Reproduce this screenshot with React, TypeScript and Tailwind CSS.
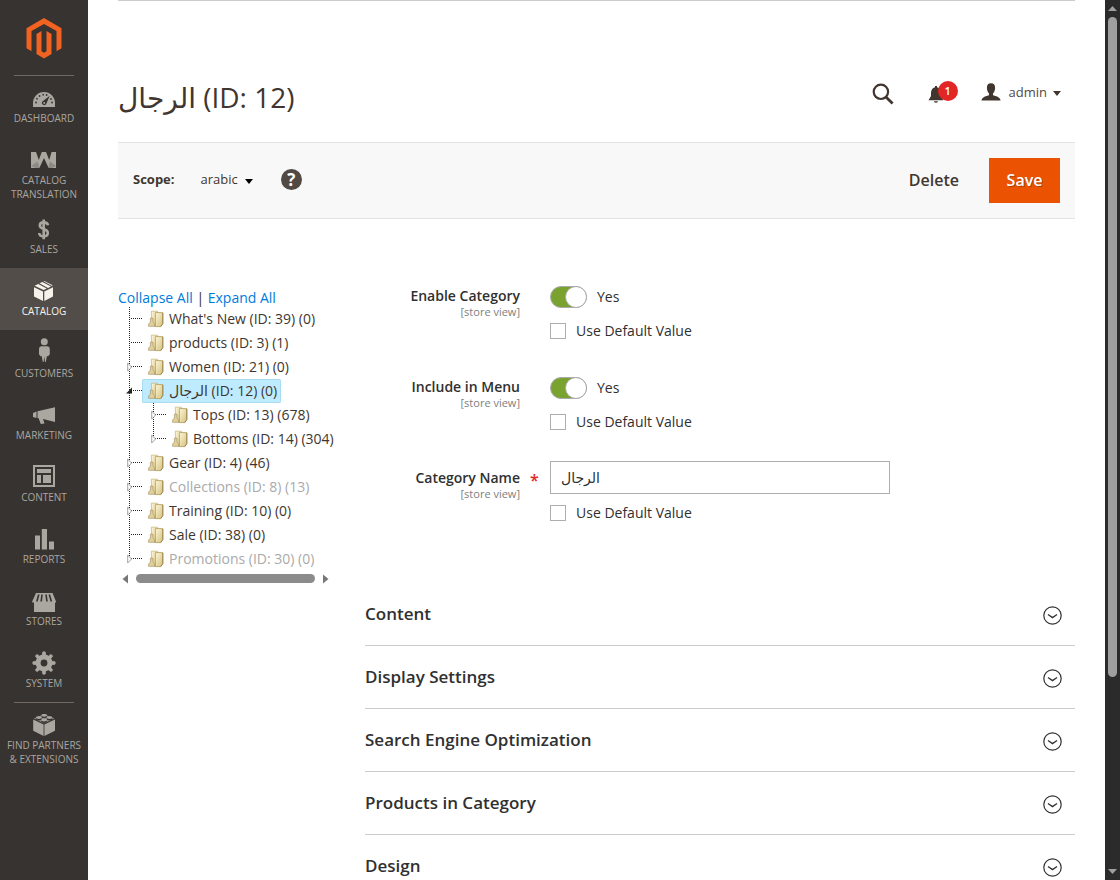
import type { ReactNode } from 'react';

const FONT = "font-['Open_Sans','DejaVu_Sans',sans-serif]";

/* ---------- Sidebar ---------- */

function LogoIcon() {
  return (
    <svg width="36" height="41" viewBox="0 0 36 41" fill="#f26322" aria-hidden="true">
      <path d="M18 0 0.5 10.2V30.3L5.5 33.2V13.1L18 5.9 30.5 13.1V33.2L35.5 30.3V10.2Z" />
      <path d="M20.5 33.2 18 34.7 15.5 33.2V13.1L10.5 16V36.1L18 40.5 25.5 36.1V16L20.5 13.1Z" />
    </svg>
  );
}

const icons: Record<string, ReactNode> = {
  dashboard: (
    <>
      <path d="M3 24V20A11 11 0 0 1 25 20V24Z" />
      <g fill="#373330">
        <circle cx="6" cy="19.5" r="0.9" />
        <circle cx="7" cy="15.7" r="0.9" />
        <circle cx="9.6" cy="13" r="0.9" />
        <circle cx="13.2" cy="11.7" r="0.9" />
        <circle cx="16.6" cy="12" r="0.9" />
        <circle cx="22" cy="19.5" r="0.9" />
        <circle cx="21" cy="16" r="0.9" />
        <path d="M19.8 12.8 16.4 20.6A2.3 2.3 0 1 1 12.4 18.4Z" />
      </g>
      <circle cx="14.2" cy="20" r="0.9" />
    </>
  ),
  translation: (
    <>
      <path d="M1 7H6L8.8 15 11.8 7H16L19.2 15 21.6 7H26V23H18.6L14 13 9.4 23H1Z" />
      <path d="M1 21 7.5 16.5 9.5 22.5 9.2 23H5.5ZM26 21 20 16.5 18.4 22.5 18.6 23H22Z" fill="#373330" fillOpacity="0.25" />
    </>
  ),
  sales: (
    <path
      d="M18 11.2C17.6 8.9 16 8.4 13.8 8.4 11.3 8.4 9.8 9.6 9.8 11.5 9.8 16.2 17.8 13.7 17.8 18.8 17.8 21.2 16 22.4 13.6 22.4 11 22.4 9.4 21.4 9.2 19M13.7 5.5V25.2"
      fill="none"
      stroke="currentColor"
      strokeWidth="2.6"
    />
  ),
  catalog: (
    <>
      <path d="M4 11.3 13 15.6V25L4 20.4ZM14.3 15.6 23 11.3V20.4L14.3 25Z" />
      <path d="M9.5 7.3 12.3 6 21 10.4 18 11.9ZM4.6 9.8 8.2 8 16.8 12.4 13.6 14ZM13.5 5.3 14.3 5 22.6 9.3 22 9.9Z" />
    </>
  ),
  customers: (
    <>
      <circle cx="14.3" cy="3.7" r="3.5" />
      <path d="M11.2 8.3H17.5Q19.8 8.5 19.8 11V16.2L18 18.5 17 17.8 15.8 24H15L14.3 18.5 13.6 24H12.8L11.6 17.8 10.6 18.5 9 16.2V11Q9 8.5 11.2 8.3Z" />
    </>
  ),
  marketing: (
    <>
      <path d="M3 13 6.5 11.6V18L3 17Z" />
      <path d="M7.5 11.3 25 7.2V22L13 18.9 14.5 23.6 10.8 24 8.6 18.3 7.5 18Z" />
    </>
  ),
  content: (
    <>
      <path fillRule="evenodd" d="M3 3H25V25H3ZM5 5V23H23V5Z" />
      <path d="M7 7H21V11H7ZM7 13H11V21H7ZM13 13H21V21H13Z" />
    </>
  ),
  reports: <path d="M5 11.5H10V25.5H5ZM11.8 5H17V25.5H11.8ZM19 17.5H24V25.5H19Z" />,
  stores: (
    <>
      <path d="M6 7H22.5L26 15.5V16.5H25V26H4V16.5H2.2V15.5Z" />
      <path
        d="M8.8 8.5 6.8 15.5M12 8.5 11.2 15.5M16 8.5 17 15.5M19.3 8.5 21.4 15.5"
        stroke="#373330"
        strokeWidth="1.6"
      />
    </>
  ),
  system: (
    <>
      <circle cx="14" cy="15" r="5.9" fill="none" stroke="currentColor" strokeWidth="5" />
      <path
        d="M12.3 7.5 12.8 4Q14 3.6 15.2 4L15.7 7.5ZM12.3 22.5 12.8 26Q14 26.4 15.2 26L15.7 22.5ZM6.5 13.3 3 13.8Q2.6 15 3 16.2L6.5 16.7ZM21.5 13.3 25 13.8Q25.4 15 25 16.2L21.5 16.7ZM7.5 10.9 5.4 8.1Q6 7 7.1 6.4L9.9 8.5ZM20.5 10.9 22.6 8.1Q22 7 20.9 6.4L18.1 8.5ZM7.5 19.1 5.4 21.9Q6 23 7.1 23.6L9.9 21.5ZM20.5 19.1 22.6 21.9Q22 23 20.9 23.6L18.1 21.5Z"
        stroke="currentColor"
        strokeWidth="0.8"
      />
    </>
  ),
  partners: (
    <>
      <path d="M3.2 9.6 13.6 14.4V26L3.2 20.8ZM14.4 14.4 25 9.6V20.8L14.4 26Z" />
      <path d="M3.8 8.6 14 4.3 24.4 8.6 14 13.4Z" fillOpacity="0.75" />
      <g fill="#373330">
        <ellipse cx="14.2" cy="6.7" rx="3" ry="1.4" />
        <ellipse cx="8.8" cy="9" rx="3" ry="1.4" />
        <ellipse cx="19.6" cy="9" rx="3" ry="1.4" />
        <ellipse cx="14.2" cy="11.5" rx="3" ry="1.4" />
      </g>
      <ellipse cx="14.2" cy="5.3" rx="2.9" ry="1.4" />
      <ellipse cx="8.8" cy="7.6" rx="2.9" ry="1.4" />
      <ellipse cx="19.6" cy="7.6" rx="2.9" ry="1.4" />
      <ellipse cx="14.2" cy="10.1" rx="2.9" ry="1.4" />
    </>
  ),
};

const navItems = [
  { icon: 'dashboard', label: 'DASHBOARD' },
  { icon: 'translation', label: 'CATALOG TRANSLATION' },
  { icon: 'sales', label: 'SALES' },
  { icon: 'catalog', label: 'CATALOG', active: true },
  { icon: 'customers', label: 'CUSTOMERS' },
  { icon: 'marketing', label: 'MARKETING' },
  { icon: 'content', label: 'CONTENT' },
  { icon: 'reports', label: 'REPORTS' },
  { icon: 'stores', label: 'STORES' },
  { icon: 'system', label: 'SYSTEM' },
];

function NavItem({ icon, label, active }: { icon: string; label: string; active?: boolean }) {
  return (
    <a
      href="#"
      aria-current={active ? 'page' : undefined}
      className={`flex min-h-[62px] flex-col items-center px-1 pt-2 pb-[5px] text-center text-[10px] leading-[14px] ${
        active ? 'bg-[#524d49] text-[#f7f3eb]' : 'text-[#aaa6a0]'
      }`}
    >
      <svg width="28" height="28" viewBox="0 0 28 28" fill="currentColor" className="shrink-0" aria-hidden="true">
        {icons[icon]}
      </svg>
      <span>{label}</span>
    </a>
  );
}

function Sidebar() {
  return (
    <nav className="w-[88px] shrink-0 bg-[#373330]">
      <a href="#" aria-label="Home" className="flex h-[75px] justify-center pt-[18px]">
        <LogoIcon />
      </a>
      <hr className="mx-3.5 -mb-px border-[#736963]" />
      {navItems.map((item) => (
        <NavItem key={item.label} {...item} />
      ))}
      <hr className="mx-3.5 -mb-px border-[#736963]" />
      <a
        href="#"
        className="flex flex-col items-center pt-2 text-center text-[10px] leading-[14px] text-[#aaa6a0]"
      >
        <svg width="28" height="28" viewBox="0 0 28 28" fill="currentColor" aria-hidden="true">
          {icons.partners}
        </svg>
        <span>
          FIND PARTNERS
          <br />& EXTENSIONS
        </span>
      </a>
    </nav>
  );
}

/* ---------- Header and toolbar ---------- */

function Caret() {
  return (
    <svg width="8" height="5" viewBox="0 0 8 5" fill="currentColor" aria-hidden="true">
      <path d="M0 0H8L4 5Z" />
    </svg>
  );
}

function Header() {
  return (
    <header className="flex items-start justify-between border-t border-[#cccccc] pt-[77px] text-[#41362f]">
      <h1 className="h-16 text-[28px] leading-[38px]">الرجال (ID: 12)</h1>
      <div className="flex h-7 items-center pr-3.5">
        <button type="button" aria-label="Search" className="mt-1 mr-[34px]">
          <svg width="22" height="22" viewBox="0 0 22 22" fill="none" stroke="currentColor" aria-hidden="true">
            <circle cx="8.9" cy="8.8" r="7.2" strokeWidth="2.2" />
            <path d="M13.9 14 20.6 20.4" strokeWidth="2.8" />
          </svg>
        </button>
        <button type="button" aria-label="Notifications" className="relative mt-1 mr-[37px]">
          <svg width="16" height="18" viewBox="0 0 16 18" fill="currentColor" aria-hidden="true">
            <path d="M7 1H9V2.2Q13 3.2 13 8V11L15.3 15.2H0.5L3 11V8Q3 3.2 7 2.2ZM5.8 16.2H10Q9.5 17.8 8 17.8T5.8 16.2Z" />
          </svg>
          <span className="absolute -top-1 left-2.5 h-5 w-5 rounded-full bg-[#e22626] text-center text-[11px] leading-5 font-semibold text-white">
            1
          </span>
        </button>
        <button type="button" className="flex items-center text-[13px] leading-4 text-[#514943]">
          <svg width="20" height="18" viewBox="0 0 20 18" fill="#41362f" className="mr-2" aria-hidden="true">
            <path d="M10 0.3C13 0.3 14.2 2 14.1 5 14 8 12.8 9.5 12 10.6V12.2C14.5 13.2 19.2 13.6 19.6 17.5H0.5C0.9 13.6 5.5 13.2 8 12.2V10.6C7.2 9.5 6 8 5.9 5 5.8 2 7 0.3 10 0.3Z" />
          </svg>
          <span className="mr-1.5">admin</span>
          <span className="mt-0.5 text-[#41362f]">
            <Caret />
          </span>
        </button>
      </div>
    </header>
  );
}

function Toolbar() {
  return (
    <div className="flex items-center border-y border-[#e3e3e3] bg-[#f8f8f8] p-[15px]">
      <div className="flex items-center pb-0.5 text-[13px] text-[#41362f]">
        <span className="mr-[26px] font-bold">Scope:</span>
        <button type="button" className="flex items-center">
          arabic
          <span className="mt-1 ml-[7px] text-black">
            <Caret />
          </span>
        </button>
        <button
          type="button"
          aria-label="Help"
          className="ml-7 h-[21px] w-[21px] rounded-full bg-[#514943] text-center text-[17px] leading-[21px] font-bold text-white"
        >
          ?
        </button>
      </div>
      <button type="button" className="mr-[30px] ml-auto pb-0.5 text-base font-semibold text-[#41362f]">
        Delete
      </button>
      <button
        type="button"
        className="h-[45px] w-[71px] bg-[#eb5202] pb-0.5 text-base font-semibold text-white [text-shadow:1px_1px_0_rgba(0,0,0,0.25)]"
      >
        Save
      </button>
    </div>
  );
}

/* ---------- Category tree ---------- */

type Elbow = 'leaf' | 'closed' | 'open' | 'line';

function ElbowIcon({ kind, last }: { kind: Elbow; last?: boolean }) {
  return (
    <svg width="24" height="24" viewBox="0 0 24 24" fill="none" className="shrink-0" aria-hidden="true">
      <path d={last ? 'M11.5 0V12' : 'M11.5 0V24'} stroke="#222" strokeDasharray="1 1" />
      {kind !== 'line' && <path d="M13 11.5H24" stroke="#222" strokeDasharray="1 1" />}
      {kind === 'closed' && <path d="M9.7 8V16L13.6 12Z" fill="#fff" stroke="#9a9a9a" strokeWidth="0.9" />}
      {kind === 'open' && <path d="M14 8.5V14.5H8Z" fill="#222" />}
    </svg>
  );
}

function FolderIcon() {
  return (
    <svg width="16" height="18" viewBox="0 0 16 18" className="shrink-0" aria-hidden="true">
      <defs>
        <linearGradient id="folder" x1="0" y1="0" x2="1" y2="1">
          <stop offset="0" stopColor="#fdf8dc" />
          <stop offset="1" stopColor="#d6bf78" />
        </linearGradient>
      </defs>
      <path d="M3.4 1.2H9.5V15.5L7 16.5 3.4 15Z" fill="url(#folder)" stroke="#c4b27a" strokeWidth="0.7" />
      <path d="M7.4 2.6H14.8V13.5L12.8 16.6H7.4Z" fill="url(#folder)" stroke="#b09a58" strokeWidth="0.8" />
      <path d="M14.8 3V13.5L12.8 16.6" fill="none" stroke="#8f7c48" strokeWidth="0.8" />
      <path d="M0.6 16.3V14L2.4 12V8.2H5V12L6.6 14V16.3Z" fill="#e0d09a" stroke="#a8966a" strokeWidth="0.7" />
    </svg>
  );
}

interface TreeRow {
  label: string;
  kind: Elbow;
  nested?: boolean;
  last?: boolean;
  muted?: boolean;
  selected?: boolean;
}

const rows: TreeRow[] = [
  { label: "What's New (ID: 39) (0)", kind: 'leaf' },
  { label: 'products (ID: 3) (1)', kind: 'leaf' },
  { label: 'Women (ID: 21) (0)', kind: 'closed' },
  { label: 'الرجال (ID: 12) (0)', kind: 'open', selected: true },
  { label: 'Tops (ID: 13) (678)', kind: 'closed', nested: true },
  { label: 'Bottoms (ID: 14) (304)', kind: 'closed', nested: true, last: true },
  { label: 'Gear (ID: 4) (46)', kind: 'closed' },
  { label: 'Collections (ID: 8) (13)', kind: 'closed', muted: true },
  { label: 'Training (ID: 10) (0)', kind: 'closed' },
  { label: 'Sale (ID: 38) (0)', kind: 'leaf' },
  { label: 'Promotions (ID: 30) (0)', kind: 'closed', muted: true, last: true },
];

function CategoryTree() {
  return (
    <aside className="w-[217px] shrink-0 text-sm">
      <div className="h-5 leading-[22px] text-[#303030]">
        <a href="#" className="text-[#007bdb]">
          Collapse All
        </a>
        {' | '}
        <a href="#" className="text-[#007bdb]">
          Expand All
        </a>
      </div>
      <ul>
        {rows.map((row) => (
          <li key={row.label} className="flex h-6 items-center whitespace-nowrap">
            {row.nested && <ElbowIcon kind="line" />}
            <ElbowIcon kind={row.kind} last={row.last} />
            <a
              href="#"
              className={`flex h-6 items-center gap-[5px] pr-1 pl-1.5 leading-6 ${
                row.selected ? 'rounded-xs bg-[#beebff] ring-1 ring-[#a9dcf3] ring-inset' : ''
              } ${row.muted ? 'text-[#aaaaaa]' : 'text-[#41362f]'}`}
            >
              <FolderIcon />
              {row.label}
            </a>
          </li>
        ))}
      </ul>
      <div className="flex h-[15px] items-center gap-2 px-1 text-[#777777]">
        <svg width="6" height="10" viewBox="0 0 6 10" fill="currentColor" aria-hidden="true">
          <path d="M6 0.5V9.5L0.5 5Z" />
        </svg>
        <div className="h-[9px] w-[179px] rounded-full bg-[#8b8b8b]" />
        <svg width="6" height="10" viewBox="0 0 6 10" fill="currentColor" aria-hidden="true">
          <path d="M0 0.5V9.5L5.5 5Z" />
        </svg>
      </div>
    </aside>
  );
}

/* ---------- Form ---------- */

function Field({
  id,
  label,
  required,
  children,
}: {
  id: string;
  label: string;
  required?: boolean;
  children: ReactNode;
}) {
  return (
    <div className="flex min-h-[91px]">
      <div className="w-[155px] shrink-0 text-right">
        <label htmlFor={id} className="block text-sm leading-5 font-semibold text-[#303030]">
          {label}
        </label>
        <span className="block text-[11px] leading-3 text-[#808080]">[store view]</span>
      </div>
      <span aria-hidden="true" className="w-[30px] shrink-0 pl-2.5 text-base leading-6 font-semibold text-[#e22626]">
        {required ? '*' : ''}
      </span>
      <div className="flex-1">
        {children}
        <label className="mt-2 flex h-[22px] items-center gap-2.5 text-sm text-[#303030]">
          <input
            type="checkbox"
            className="h-4 w-4 appearance-none border border-[#adadad] bg-white checked:bg-[#adadad]"
          />
          Use Default Value
        </label>
      </div>
    </div>
  );
}

function Toggle({ id }: { id: string }) {
  return (
    <div className="flex h-[26px] items-start gap-2.5 text-sm leading-[22px] text-[#303030]">
      <input
        id={id}
        type="checkbox"
        role="switch"
        defaultChecked
        className="flex h-[22px] w-[37px] appearance-none items-center rounded-full border border-[#aaaaaa] bg-[#e3e3e3] before:h-[22px] before:w-[22px] before:shrink-0 before:rounded-full before:border before:border-[#aaaaaa] before:bg-white checked:justify-end checked:bg-[#79a22e] checked:before:-mr-px"
      />
      <span>Yes</span>
    </div>
  );
}

const sections = [
  'Content',
  'Display Settings',
  'Search Engine Optimization',
  'Products in Category',
  'Design',
];

function Section({ title }: { title: string }) {
  return (
    <button
      type="button"
      aria-expanded="false"
      className="flex h-[63px] w-full items-center justify-between border-b border-[#cccccc] pr-[13px] text-left text-[17px] font-semibold text-[#303030]"
    >
      {title}
      <svg width="19" height="19" viewBox="0 0 19 19" fill="none" stroke="#303030" className="mt-0.5" aria-hidden="true">
        <circle cx="9.5" cy="9.5" r="8.7" strokeWidth="1.2" />
        <path d="M5 8.5 9.5 11.6 14 8.5" strokeWidth="1.3" />
      </svg>
    </button>
  );
}

/* ---------- Window scrollbar ---------- */

function ScrollRail() {
  return (
    <div aria-hidden="true" className="flex w-[15px] shrink-0 flex-col items-center bg-[#2b2b2b] py-1.5 text-[#9f9f9f]">
      <svg width="9" height="5" viewBox="0 0 9 5" fill="currentColor">
        <path d="M0 5H9L4.5 0Z" />
      </svg>
      <div className="my-1.5 flex w-[9px] flex-1 flex-col">
        <div className="h-[78%] rounded-full bg-[#9f9f9f]" />
      </div>
      <svg width="9" height="5" viewBox="0 0 9 5" fill="currentColor">
        <path d="M0 0H9L4.5 5Z" />
      </svg>
    </div>
  );
}

export default function App() {
  return (
    <div className={`flex h-screen overflow-hidden bg-white ${FONT}`}>
      <Sidebar />
      <main className="min-w-0 flex-1 overflow-hidden px-[30px]">
        <Header />
        <Toolbar />
        <div className="flex gap-[30px] pt-[67px]">
          <div className="pt-px">
            <CategoryTree />
          </div>
          <div className="min-w-0 flex-1">
            <Field id="enable" label="Enable Category">
              <Toggle id="enable" />
            </Field>
            <Field id="menu" label="Include in Menu">
              <Toggle id="menu" />
            </Field>
            <Field id="name" label="Category Name" required>
              <input
                id="name"
                type="text"
                defaultValue="الرجال"
                className="-mt-[7px] block h-[33px] w-full max-w-[340px] border border-[#adadad] px-2.5 text-sm text-[#303030]"
              />
            </Field>
            <div className="pt-6">
              {sections.map((title) => (
                <Section key={title} title={title} />
              ))}
            </div>
          </div>
        </div>
      </main>
      <ScrollRail />
    </div>
  );
}
